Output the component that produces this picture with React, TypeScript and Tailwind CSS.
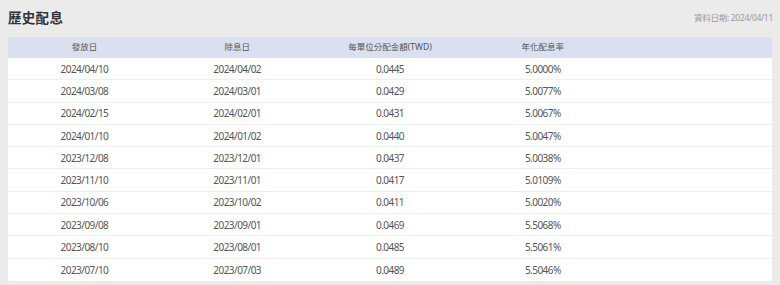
import React from "react";

const rows = [
  ["2024/04/10", "2024/04/02", "0.0445", "5.0000%"],
  ["2024/03/08", "2024/03/01", "0.0429", "5.0077%"],
  ["2024/02/15", "2024/02/01", "0.0431", "5.0067%"],
  ["2024/01/10", "2024/01/02", "0.0440", "5.0047%"],
  ["2023/12/08", "2023/12/01", "0.0437", "5.0038%"],
  ["2023/11/10", "2023/11/01", "0.0417", "5.0109%"],
  ["2023/10/06", "2023/10/02", "0.0411", "5.0020%"],
  ["2023/09/08", "2023/09/01", "0.0469", "5.5068%"],
  ["2023/08/10", "2023/08/01", "0.0485", "5.5061%"],
  ["2023/07/10", "2023/07/03", "0.0489", "5.5046%"],
];

const font = { fontFamily: '"Noto Sans", "Noto Sans CJK TC", sans-serif' };

export default function App() {
  return (
    <div
      className="w-[780px] h-[285px] bg-[#ebebeb] overflow-hidden"
      style={font}
    >
      <div className="flex items-end justify-between pl-[8px] pr-[7px] h-[37px] pb-[12px]">
        <div className="text-[13.5px] font-bold text-[#333] leading-none tracking-[0.3px]">
          歷史配息
        </div>
        <div className="text-[8.5px] text-[#9a9a9a] leading-none mb-[3px] tracking-[-0.3px]">
          資料日期: 2024/04/11
        </div>
      </div>
      <div className="mx-[8px] bg-white rounded-[2px] overflow-hidden">
        <div className="grid grid-cols-5 h-[21px] items-center bg-[#dbe0f1] text-[8.5px] text-[#555] text-center leading-none">
          <div>發放日</div>
          <div>除息日</div>
          <div>每單位分配金額(TWD)</div>
          <div>年化配息率</div>
          <div></div>
        </div>
        {rows.map((r, i) => (
          <div
            key={i}
            className={`grid grid-cols-5 h-[22.3px] items-center text-[10px] text-[#555] text-center leading-none tracking-[-0.55px] ${
              i < rows.length - 1 ? "border-b border-[#efefef]" : ""
            }`}
          >
            <div>{r[0]}</div>
            <div>{r[1]}</div>
            <div>{r[2]}</div>
            <div>{r[3]}</div>
            <div></div>
          </div>
        ))}
      </div>
    </div>
  );
}
